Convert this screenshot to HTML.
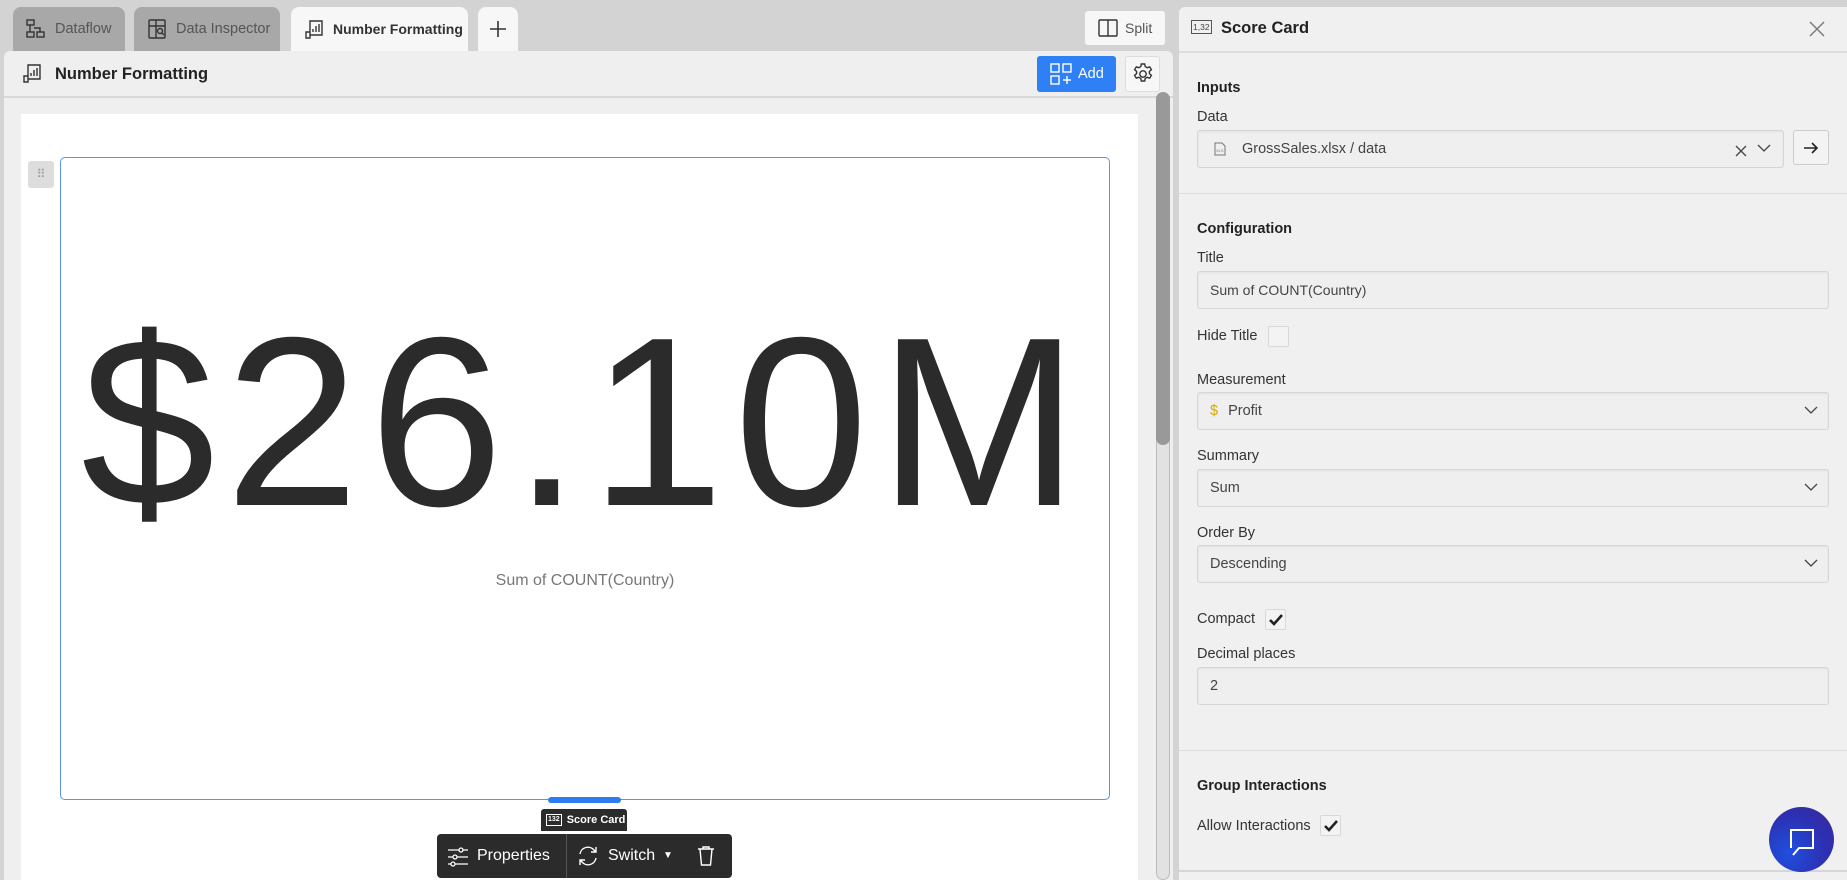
<!DOCTYPE html>
<html><head><meta charset="utf-8"><style>
*{box-sizing:border-box;margin:0;padding:0}
body{width:1847px;height:880px;overflow:hidden;background:#d3d3d3;font-family:"Liberation Sans",sans-serif;position:relative;color:#2b2b2b}
.a{position:absolute}
.tab{position:absolute;top:7px;height:44px;border-radius:8px 8px 0 0;display:flex;align-items:center;font-size:14.5px;gap:8px;padding-left:12px}
.lbl{position:absolute;left:1197px;font-size:14.5px;color:#333}
.h{position:absolute;left:1197px;font-size:14.5px;font-weight:bold;color:#222}
.inp{position:absolute;left:1197px;width:632px;height:38px;border:1px solid #d6d6d6;border-radius:3px;background:#efefef;font-size:14.5px;color:#444;display:flex;align-items:center;padding-left:12px;box-shadow:inset 0 1px 2px rgba(0,0,0,.06)}
.chev{position:absolute;right:10px;top:12px}
.cb{position:absolute;width:21px;height:21px;border:1px solid #d8d8d8;border-radius:2px;background:#f3f3f3}
</style></head><body>
<div class="tab" style="left:13px;width:112px;background:#a8a8a8;color:#555"><svg width="22" height="22" viewBox="0 0 22 22" fill="none" stroke="#333" stroke-width="1.4"><rect x="2" y="2" width="7" height="5"/><rect x="12" y="14" width="7" height="5"/><rect x="2" y="14" width="7" height="5"/><path d="M5 7v7M9 10h6v4"/></svg>Dataflow</div>
<div class="tab" style="left:134px;width:146px;background:#a8a8a8;color:#555"><svg width="22" height="22" viewBox="0 0 22 22" fill="none" stroke="#333" stroke-width="1.4"><rect x="3" y="2" width="16" height="18" rx="1"/><path d="M3 8h16M10 2v18"/><circle cx="14" cy="13" r="2.5"/><path d="M16 15l2 2"/></svg>Data Inspector</div>
<div class="tab" style="left:291px;width:177px;background:#f7f7f7;color:#333;font-weight:bold;font-size:14px"><svg width="22" height="22" viewBox="0 0 22 22" fill="none" stroke="#333" stroke-width="1.4"><path d="M7 3h12v14H7zM3 14h4v6H3zM10 14v-3M13 14V8M16 14V6"/></svg>Number Formatting</div>
<div class="tab" style="left:478px;width:40px;background:#f7f7f7;padding-left:11px"><svg width="18" height="18" viewBox="0 0 18 18" stroke="#333" stroke-width="1.6"><path d="M9 1v16M1 9h16"/></svg></div>
<div class="a" style="left:1085px;top:11px;width:80px;height:34px;background:#f7f7f7;border-radius:3px;display:flex;align-items:center;gap:6px;padding-left:12px;font-size:14px;color:#555"><svg width="22" height="22" viewBox="0 0 22 22" fill="none" stroke="#333" stroke-width="1.4"><rect x="2" y="3" width="18" height="16" rx="1"/><path d="M11 3v16"/></svg>Split</div>
<div class="a" style="left:4px;top:51px;width:1169px;height:829px;background:#efefef;border-radius:6px 6px 0 0"></div>
<div class="a" style="left:4px;top:96px;width:1169px;height:2px;background:#d8d8d8"></div>
<div class="a" style="left:21px;top:62px"><svg width="22" height="22" viewBox="0 0 22 22" fill="none" stroke="#333" stroke-width="1.4"><path d="M7 3h12v14H7zM3 14h4v6H3zM10 14v-3M13 14V8M16 14V6"/></svg></div>
<div class="a" style="left:55px;top:65px;font-size:16.5px;font-weight:bold;color:#222">Number Formatting</div>
<div class="a" style="left:1037px;top:56px;width:79px;height:36px;background:#2f80f5;border-radius:3px;color:#fff;font-size:14.5px;display:flex;align-items:center;gap:6px;padding-left:13px"><svg width="22" height="22" viewBox="0 0 22 22" fill="none" stroke="#fff" stroke-width="1.4"><rect x="1" y="1" width="8" height="8"/><rect x="13" y="1" width="8" height="8"/><rect x="1" y="13" width="8" height="8"/><path d="M17 13v8M13 17h8"/></svg>Add</div>
<div class="a" style="left:1125px;top:56px;width:35px;height:36px;background:#f7f7f7;border:1px solid #ddd;border-radius:3px;display:flex;align-items:center;justify-content:center"><svg width="24" height="24" viewBox="0 0 24 24" fill="none" stroke="#333" stroke-width="1.4"><circle cx="12" cy="12" r="3.2"/><path d="M10.3 2h3.4l.5 2.6 2 1.1 2.5-.9 1.7 2.9-2 1.7v2.2l2 1.7-1.7 2.9-2.5-.9-2 1.1-.5 2.6h-3.4l-.5-2.6-2-1.1-2.5.9-1.7-2.9 2-1.7V9.4l-2-1.7 1.7-2.9 2.5.9 2-1.1z"/></svg></div>
<div class="a" style="left:21px;top:114px;width:1117px;height:766px;background:#fff"></div>
<div class="a" style="left:1156px;top:98px;width:14px;height:782px;background:#e2e2e2;border:1px solid #bbb;border-radius:7px"></div>
<div class="a" style="left:1156px;top:92px;width:14px;height:353px;background:#999;border-radius:7px"></div>
<div class="a" style="left:28px;top:161px;width:26px;height:27px;background:#ddd;border-radius:3px;color:#999;font-size:12px;text-align:center;line-height:27px">⠿</div>
<div class="a" style="left:60px;top:157px;width:1050px;height:643px;border:1.5px solid #5b94e6;border-radius:5px"></div>
<div class="a" style="left:60px;top:273px;width:1050px;text-align:center;font-size:241px;line-height:300px;color:#2b2b2b;letter-spacing:10px;white-space:nowrap">$26.10M</div>
<div class="a" style="left:60px;top:572px;width:1050px;text-align:center;font-size:16px;color:#777">Sum of COUNT(Country)</div>
<div class="a" style="left:548px;top:797px;width:73px;height:6px;background:#2f7cf0;border-radius:3px"></div>
<div class="a" style="left:541px;top:809px;width:86px;height:22px;background:#2b2b2b;border-radius:3px 3px 0 0;color:#fff;font-size:11px;font-weight:bold;display:flex;align-items:center;gap:5px;padding-left:5px;white-space:nowrap"><span style="border:1px solid #fff;font-size:7px;padding:0 1px;line-height:10px">132</span>Score Card</div>
<div class="a" style="left:437px;top:834px;width:295px;height:44px;background:#2b2b2b;border-radius:4px;color:#fff;font-size:16px;white-space:nowrap">
<svg class="a" style="left:10px;top:12px" width="22" height="22" viewBox="0 0 22 22" fill="none" stroke="#fff" stroke-width="1.3"><path d="M1 4h20M1 11h20M1 18h20"/><circle cx="14" cy="4" r="2" fill="#2b2b2b"/><circle cx="8" cy="11" r="2" fill="#2b2b2b"/><circle cx="6" cy="18" r="2" fill="#2b2b2b"/></svg>
<span class="a" style="left:40px;top:13px">Properties</span>
<div class="a" style="left:129px;top:0;width:1px;height:44px;background:#555"></div>
<svg class="a" style="left:139px;top:10px" width="24" height="24" viewBox="0 0 24 24" fill="none" stroke="#fff" stroke-width="1.4"><path d="M4 10a8 8 0 0 1 14-4l2 2M20 14a8 8 0 0 1-14 4l-2-2M20 3v5h-5M4 21v-5h5"/></svg>
<span class="a" style="left:171px;top:13px">Switch</span>
<span class="a" style="left:226px;top:16px;font-size:10px">▼</span>
<svg class="a" style="left:258px;top:11px" width="22" height="22" viewBox="0 0 22 22" fill="none" stroke="#fff" stroke-width="1.4"><path d="M3 4h16M8 4V2h6v2M5 4l1.5 16h9L17 4"/></svg>
</div>
<div class="a" style="left:1179px;top:7px;width:668px;height:873px;background:#f0f0f0;border-radius:6px 0 0 0"></div>
<div class="a" style="left:1179px;top:51px;width:668px;height:2px;background:#ddd"></div>
<div class="a" style="left:1191px;top:20px;font-size:8.5px;border:1px solid #555;padding:1px 1px;color:#444">1,32</div>
<div class="a" style="left:1221px;top:19px;font-size:16.5px;font-weight:bold;color:#222">Score Card</div>
<svg class="a" style="left:1809px;top:21px" width="16" height="16" viewBox="0 0 16 16" stroke="#777" stroke-width="1.4"><path d="M1 1l14 14M15 1L1 15"/></svg>
<div class="h" style="top:80px">Inputs</div>
<div class="lbl" style="top:109px">Data</div>
<div class="inp" style="top:130px;width:587px;padding-left:14px"><svg width="16" height="16" viewBox="0 0 16 16" fill="none" stroke="#777" stroke-width="1"><path d="M3 2h7l3 3v9H3z"/><text x="4" y="11" font-size="4" fill="#777" stroke="none">XLS</text></svg><span style="margin-left:14px">GrossSales.xlsx / data</span>
<svg class="a" style="right:36px;top:14px" width="12" height="12" viewBox="0 0 12 12" stroke="#444" stroke-width="1.3"><path d="M1 1l10 10M11 1L1 11"/></svg>
<svg class="chev" style="right:12px" width="14" height="10" viewBox="0 0 14 10" fill="none" stroke="#444" stroke-width="1.3"><path d="M1 2l6 6 6-6"/></svg></div>
<div class="a" style="left:1793px;top:130px;width:36px;height:35px;border:1.5px solid #ccc;border-radius:3px;background:#f3f3f3"><svg class="a" style="left:9px;top:9px" width="16" height="16" viewBox="0 0 16 16" fill="none" stroke="#222" stroke-width="1.6"><path d="M1 8h13M9 3l5 5-5 5"/></svg></div>
<div class="a" style="left:1179px;top:193px;width:668px;height:1px;background:#ddd"></div>
<div class="h" style="top:221px">Configuration</div>
<div class="lbl" style="top:250px">Title</div>
<div class="inp" style="top:271px;font-size:14px">Sum of COUNT(Country)</div>
<div class="lbl" style="top:328px">Hide Title</div>
<div class="cb" style="left:1268px;top:326px"></div>
<div class="lbl" style="top:372px">Measurement</div>
<div class="inp" style="top:392px"><span style="color:#d4a800;margin-right:10px">$</span>Profit<svg class="chev" width="14" height="10" viewBox="0 0 14 10" fill="none" stroke="#444" stroke-width="1.3"><path d="M1 2l6 6 6-6"/></svg></div>
<div class="lbl" style="top:448px">Summary</div>
<div class="inp" style="top:469px">Sum<svg class="chev" width="14" height="10" viewBox="0 0 14 10" fill="none" stroke="#444" stroke-width="1.3"><path d="M1 2l6 6 6-6"/></svg></div>
<div class="lbl" style="top:525px">Order By</div>
<div class="inp" style="top:545px">Descending<svg class="chev" width="14" height="10" viewBox="0 0 14 10" fill="none" stroke="#444" stroke-width="1.3"><path d="M1 2l6 6 6-6"/></svg></div>
<div class="lbl" style="top:611px">Compact</div>
<div class="cb" style="left:1265px;top:609px"><svg class="a" style="left:2px;top:3px" width="16" height="14" viewBox="0 0 16 14" fill="none" stroke="#222" stroke-width="2.6"><path d="M2 7l4 4 8-9"/></svg></div>
<div class="lbl" style="top:646px">Decimal places</div>
<div class="inp" style="top:667px">2</div>
<div class="a" style="left:1179px;top:750px;width:668px;height:1px;background:#ddd"></div>
<div class="h" style="top:778px">Group Interactions</div>
<div class="lbl" style="top:818px">Allow Interactions</div>
<div class="cb" style="left:1320px;top:815px"><svg class="a" style="left:2px;top:3px" width="16" height="14" viewBox="0 0 16 14" fill="none" stroke="#222" stroke-width="2.6"><path d="M2 7l4 4 8-9"/></svg></div>
<div class="a" style="left:1179px;top:870px;width:668px;height:2px;background:#d6d6d6"></div>
<div class="a" style="left:1769px;top:807px;width:65px;height:65px;border-radius:50%;background:radial-gradient(circle at 30% 70%,#1f4fe0,#2d2fb0 60%,#3a2a9a)"><svg class="a" style="left:16px;top:17px" width="34" height="34" viewBox="0 0 34 34" fill="none" stroke="#fff" stroke-width="2"><path d="M6 24V6h22v18H14l-6 7"/></svg></div>
</body></html>
